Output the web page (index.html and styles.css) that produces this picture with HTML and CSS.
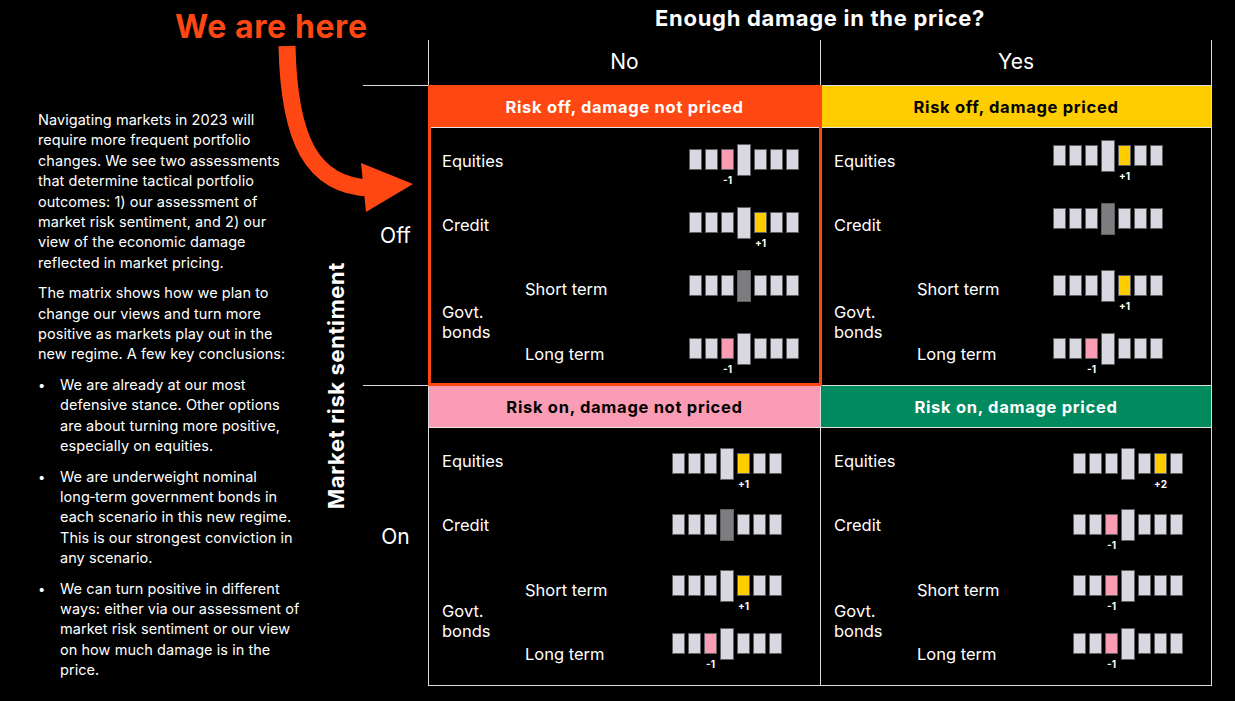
FILE: index.html
```html
<!DOCTYPE html>
<html lang="en">
<head>
<meta charset="utf-8">
<title>Enough damage in the price?</title>
<link rel="stylesheet" href="styles.css">
</head>
<body>
<div class="page">
  <div class="callout">We are here</div>
  <svg class="arrow" width="430" height="230" viewBox="0 0 430 230" aria-hidden="true">
    <path d="M287 46 C 289 140, 312 186, 370 188" fill="none" stroke="#ff4713" stroke-width="17"/>
    <polygon points="361,163 413,184 366,212" fill="#ff4713"/>
  </svg>

  <div class="intro">
    <p>Navigating markets in 2023 will require more frequent portfolio changes. We see two assessments that determine tactical portfolio outcomes: 1) our assessment of market risk sentiment, and 2) our view of the economic damage reflected in market pricing.</p>
    <p>The matrix shows how we plan to change our views and turn more positive as markets play out in the new regime. A few key conclusions:</p>
    <ul>
      <li>We are already at our most defensive stance. Other options are about turning more positive, especially on equities.</li>
      <li>We are underweight nominal long&#8209;term government bonds in each scenario in this new regime. This is our strongest conviction in any scenario.</li>
      <li>We can turn positive in different ways: either via our assessment of market risk sentiment or our view on how much damage is in the price.</li>
    </ul>
  </div>

  <div class="chart">
    <div class="title">Enough damage in the price?</div>
    <div class="grid">
      <div class="corner"></div>
      <div class="side-head"></div>
      <div class="col-head">No</div>
      <div class="col-head last">Yes</div>

      <div class="axis"><span>Market risk sentiment</span></div>
      <div class="side top">Off</div>

      <!-- Top left -->
      <div class="quad q-tl">
        <div class="band band-orange">Risk off, damage not priced</div>
        <div class="body top">
          <div class="lbl wide r1">Equities</div>
          <div class="bars r1">
            <div class="slot"><i class="bar"></i></div><div class="slot"><i class="bar"></i></div><div class="slot"><i class="bar pink"></i><b class="val">-1</b></div><div class="slot mid"><i class="bar"></i></div><div class="slot"><i class="bar"></i></div><div class="slot"><i class="bar"></i></div><div class="slot"><i class="bar"></i></div>
          </div>
          <div class="lbl wide r2">Credit</div>
          <div class="bars r2">
            <div class="slot"><i class="bar"></i></div><div class="slot"><i class="bar"></i></div><div class="slot"><i class="bar"></i></div><div class="slot mid"><i class="bar"></i></div><div class="slot"><i class="bar yellow"></i><b class="val">+1</b></div><div class="slot"><i class="bar"></i></div><div class="slot"><i class="bar"></i></div>
          </div>
          <div class="lbl govt">Govt.<br>bonds</div>
          <div class="sub r3">Short term</div>
          <div class="bars r3">
            <div class="slot"><i class="bar"></i></div><div class="slot"><i class="bar"></i></div><div class="slot"><i class="bar"></i></div><div class="slot mid"><i class="bar dark"></i></div><div class="slot"><i class="bar"></i></div><div class="slot"><i class="bar"></i></div><div class="slot"><i class="bar"></i></div>
          </div>
          <div class="sub r4">Long term</div>
          <div class="bars r4">
            <div class="slot"><i class="bar"></i></div><div class="slot"><i class="bar"></i></div><div class="slot"><i class="bar pink"></i><b class="val">-1</b></div><div class="slot mid"><i class="bar"></i></div><div class="slot"><i class="bar"></i></div><div class="slot"><i class="bar"></i></div><div class="slot"><i class="bar"></i></div>
          </div>
        </div>
      </div>

      <!-- Top right -->
      <div class="quad q-tr last">
        <div class="band band-yellow">Risk off, damage priced</div>
        <div class="body top">
          <div class="lbl wide r1">Equities</div>
          <div class="bars r1 up">
            <div class="slot"><i class="bar"></i></div><div class="slot"><i class="bar"></i></div><div class="slot"><i class="bar"></i></div><div class="slot mid"><i class="bar"></i></div><div class="slot"><i class="bar yellow"></i><b class="val">+1</b></div><div class="slot"><i class="bar"></i></div><div class="slot"><i class="bar"></i></div>
          </div>
          <div class="lbl wide r2">Credit</div>
          <div class="bars r2 up">
            <div class="slot"><i class="bar"></i></div><div class="slot"><i class="bar"></i></div><div class="slot"><i class="bar"></i></div><div class="slot mid"><i class="bar dark"></i></div><div class="slot"><i class="bar"></i></div><div class="slot"><i class="bar"></i></div><div class="slot"><i class="bar"></i></div>
          </div>
          <div class="lbl govt">Govt.<br>bonds</div>
          <div class="sub r3">Short term</div>
          <div class="bars r3">
            <div class="slot"><i class="bar"></i></div><div class="slot"><i class="bar"></i></div><div class="slot"><i class="bar"></i></div><div class="slot mid"><i class="bar"></i></div><div class="slot"><i class="bar yellow"></i><b class="val">+1</b></div><div class="slot"><i class="bar"></i></div><div class="slot"><i class="bar"></i></div>
          </div>
          <div class="sub r4">Long term</div>
          <div class="bars r4">
            <div class="slot"><i class="bar"></i></div><div class="slot"><i class="bar"></i></div><div class="slot"><i class="bar pink"></i><b class="val">-1</b></div><div class="slot mid"><i class="bar"></i></div><div class="slot"><i class="bar"></i></div><div class="slot"><i class="bar"></i></div><div class="slot"><i class="bar"></i></div>
          </div>
        </div>
      </div>

      <div class="side">On</div>

      <!-- Bottom left -->
      <div class="quad q-bl">
        <div class="band band-pink">Risk on, damage not priced</div>
        <div class="body bottom">
          <div class="lbl wide r1">Equities</div>
          <div class="bars r1">
            <div class="slot"><i class="bar"></i></div><div class="slot"><i class="bar"></i></div><div class="slot"><i class="bar"></i></div><div class="slot mid"><i class="bar"></i></div><div class="slot"><i class="bar yellow"></i><b class="val">+1</b></div><div class="slot"><i class="bar"></i></div><div class="slot"><i class="bar"></i></div>
          </div>
          <div class="lbl wide r2">Credit</div>
          <div class="bars r2">
            <div class="slot"><i class="bar"></i></div><div class="slot"><i class="bar"></i></div><div class="slot"><i class="bar"></i></div><div class="slot mid"><i class="bar dark"></i></div><div class="slot"><i class="bar"></i></div><div class="slot"><i class="bar"></i></div><div class="slot"><i class="bar"></i></div>
          </div>
          <div class="lbl govt">Govt.<br>bonds</div>
          <div class="sub r3">Short term</div>
          <div class="bars r3">
            <div class="slot"><i class="bar"></i></div><div class="slot"><i class="bar"></i></div><div class="slot"><i class="bar"></i></div><div class="slot mid"><i class="bar"></i></div><div class="slot"><i class="bar yellow"></i><b class="val">+1</b></div><div class="slot"><i class="bar"></i></div><div class="slot"><i class="bar"></i></div>
          </div>
          <div class="sub r4">Long term</div>
          <div class="bars r4">
            <div class="slot"><i class="bar"></i></div><div class="slot"><i class="bar"></i></div><div class="slot"><i class="bar pink"></i><b class="val">-1</b></div><div class="slot mid"><i class="bar"></i></div><div class="slot"><i class="bar"></i></div><div class="slot"><i class="bar"></i></div><div class="slot"><i class="bar"></i></div>
          </div>
        </div>
      </div>

      <!-- Bottom right -->
      <div class="quad q-br last">
        <div class="band band-green">Risk on, damage priced</div>
        <div class="body bottom">
          <div class="lbl wide r1">Equities</div>
          <div class="bars r1">
            <div class="slot"><i class="bar"></i></div><div class="slot"><i class="bar"></i></div><div class="slot"><i class="bar"></i></div><div class="slot mid"><i class="bar"></i></div><div class="slot"><i class="bar"></i></div><div class="slot"><i class="bar yellow"></i><b class="val">+2</b></div><div class="slot"><i class="bar"></i></div>
          </div>
          <div class="lbl wide r2">Credit</div>
          <div class="bars r2">
            <div class="slot"><i class="bar"></i></div><div class="slot"><i class="bar"></i></div><div class="slot"><i class="bar pink"></i><b class="val">-1</b></div><div class="slot mid"><i class="bar"></i></div><div class="slot"><i class="bar"></i></div><div class="slot"><i class="bar"></i></div><div class="slot"><i class="bar"></i></div>
          </div>
          <div class="lbl govt">Govt.<br>bonds</div>
          <div class="sub r3">Short term</div>
          <div class="bars r3">
            <div class="slot"><i class="bar"></i></div><div class="slot"><i class="bar"></i></div><div class="slot"><i class="bar pink"></i><b class="val">-1</b></div><div class="slot mid"><i class="bar"></i></div><div class="slot"><i class="bar"></i></div><div class="slot"><i class="bar"></i></div><div class="slot"><i class="bar"></i></div>
          </div>
          <div class="sub r4">Long term</div>
          <div class="bars r4">
            <div class="slot"><i class="bar"></i></div><div class="slot"><i class="bar"></i></div><div class="slot"><i class="bar pink"></i><b class="val">-1</b></div><div class="slot mid"><i class="bar"></i></div><div class="slot"><i class="bar"></i></div><div class="slot"><i class="bar"></i></div><div class="slot"><i class="bar"></i></div>
          </div>
        </div>
      </div>
    </div>
  </div>
</div>
</body>
</html>
```

FILE: styles.css
```css
* { box-sizing: border-box; }

html, body {
  margin: 0;
  padding: 0;
  background: #000;
}

body {
  font-family: "Inter", "Liberation Sans", sans-serif;
  color: #fff;
}

.page {
  position: relative;
  display: flex;
  width: 1235px;
  height: 701px;
  overflow: hidden;
  background: #000;
}

/* Annotation */
.callout {
  position: absolute;
  left: 175px;
  top: 8px;
  font-size: 32px;
  font-weight: 700;
  line-height: 38px;
  color: #ff4713;
  letter-spacing: 0.6px;
}

.arrow {
  position: absolute;
  left: 0;
  top: 0;
}

/* Intro text */
.intro {
  width: 318px;
  flex: none;
  padding: 110px 17px 0 38px;
  font-size: 14.5px;
  letter-spacing: 0.05px;
  line-height: 20.4px;
}

.intro p {
  margin: 0 0 10px;
}

.intro ul {
  margin: 0;
  padding: 0;
  list-style: none;
}

.intro li {
  position: relative;
  padding-left: 22px;
  margin-bottom: 10px;
}

.intro li::before {
  content: "\2022";
  position: absolute;
  left: 0;
  top: 0;
  font-size: 13px;
}

/* Chart */
.chart {
  flex: none;
  display: flex;
  flex-direction: column;
  width: 917px;
}

.title {
  height: 40px;
  margin-left: 110px;
  width: 784px;
  display: flex;
  align-items: center;
  justify-content: center;
  font-size: 22px;
  letter-spacing: 0.7px;
  font-weight: 700;
  padding-bottom: 4px;
}

.grid {
  display: grid;
  grid-template-columns: 45px 65px 392px 392px;
  grid-template-rows: 46px 300px 300px;
}

.side-head {
  border-bottom: 1px solid #dcdcdc;
}

.col-head {
  border-left: 1px solid #dcdcdc;
  border-bottom: 1px solid #dcdcdc;
  display: flex;
  align-items: center;
  justify-content: center;
  font-size: 21px;
  padding-bottom: 2px;
}

.col-head.last,
.quad.last {
  border-right: 1px solid #dcdcdc;
}

.axis {
  grid-row: 2 / span 2;
  grid-column: 1;
  display: flex;
  align-items: center;
  justify-content: center;
  padding-right: 9px;
}

.axis span {
  writing-mode: vertical-rl;
  transform: rotate(180deg);
  font-size: 22px;
  letter-spacing: 0.6px;
  font-weight: 700;
  white-space: nowrap;
}

.side {
  display: flex;
  align-items: center;
  justify-content: center;
  font-size: 21px;
}

.side.top {
  border-bottom: 1px solid #dcdcdc;
}

.quad {
  position: relative;
  display: flex;
  flex-direction: column;
  border-left: 1px solid #dcdcdc;
  border-bottom: 1px solid #dcdcdc;
}

.q-tl::after {
  content: "";
  position: absolute;
  left: -1px;
  top: -1px;
  right: -2px;
  bottom: -1px;
  border: 3px solid #ff4713;
  z-index: 2;
  pointer-events: none;
}

.band {
  flex: none;
  height: 42px;
  border-bottom: 1px solid #e6e6e6;
  display: flex;
  align-items: center;
  justify-content: center;
  font-size: 16.5px;
  font-weight: 700;
  letter-spacing: 0.7px;
}

.band-orange { background: #ff4713; color: #fff; }
.band-yellow { background: #ffcc00; color: #000; }
.band-pink   { background: #fb9cb5; color: #000; }
.band-green  { background: #008a5e; color: #fff; }

.body {
  flex: 1;
  display: grid;
  padding-left: 13px;
  align-items: center;
  font-size: 16.5px;
}

.body.top {
  grid-template-rows: repeat(4, 63px);
}

.body.bottom {
  padding-top: 5px;
  grid-template-rows: 61px 61px 61px 55px;
}

.q-tl .body { grid-template-columns: 83px 164px auto; }
.q-bl .body { grid-template-columns: 83px 147px auto; }
.q-tr .body { grid-template-columns: 83px 136px auto; }
.q-br .body { grid-template-columns: 83px 156px auto; }

.r1 { grid-row: 1; }
.r2 { grid-row: 2; }
.r3 { grid-row: 3; }
.r4 { grid-row: 4; }

.lbl.wide { grid-column: 1 / span 2; }
.lbl.govt {
  grid-column: 1;
  grid-row: 3 / span 2;
}
.sub { grid-column: 2; }
.bars { grid-column: 3; }

.lbl, .sub { line-height: 20px; }

/* vertical nudges of the row labels against the gauges */
.top .lbl.r1 { padding-top: 3px; }
.top .lbl.r2 { padding-top: 5px; }
.top .sub.r3 { padding-top: 7px; }
.top .sub.r4 { padding-top: 11px; }
.top .lbl.govt { padding-top: 9px; }

.bottom .lbl.r1 { padding-bottom: 6px; }
.bottom .lbl.r2 { padding-top: 0; }
.bottom .sub.r3 { padding-top: 8px; }
.bottom .sub.r4 { padding-top: 20px; }
.bottom .lbl.govt { padding-top: 16px; }

.bars.up { margin-top: -8px; }

/* bar gauges */
.bars {
  display: flex;
  align-items: center;
  gap: 3px;
  height: 32px;
}

.slot {
  display: flex;
  flex-direction: column;
  align-items: center;
  width: 13px;
}

.slot.mid { width: 14px; }

.bar {
  display: block;
  width: 13px;
  height: 21px;
  background: #d9d8e0;
  border: 1px solid #5f5f62;
}

.mid .bar {
  width: 14px;
  height: 32px;
}

.bar.pink   { background: #fb9cb5; }
.bar.yellow { background: #ffcc00; }
.bar.dark   { background: #7d7d80; }

.val {
  display: block;
  height: 0;
  margin-top: 4px;
  margin-bottom: -4px;
  font-size: 10px;
  font-weight: 700;
  line-height: 12px;
  white-space: nowrap;
  color: #fff;
}
```
